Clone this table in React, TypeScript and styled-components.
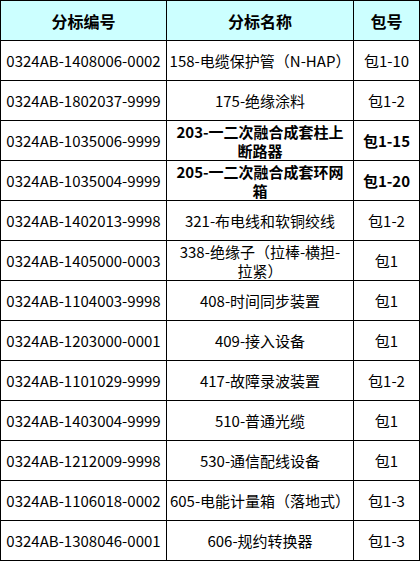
import { Fragment } from 'react'
import styled, { createGlobalStyle } from 'styled-components'

const GlobalStyle = createGlobalStyle`
  html, body {
    margin: 0;
    padding: 0;
    background: #ffffff;
  }
  body {
    font-family: "Noto Sans CJK SC", sans-serif;
    color: #000;
  }
`

const Table = styled.div`
  display: grid;
  grid-template-columns: 166px 187px 66px;
  grid-auto-rows: 40px;
  width: 420px;
  box-sizing: border-box;
  border-top: 1px solid #000;
  border-left: 1px solid #000;
`

const HeadCell = styled.div`
  display: flex;
  align-items: center;
  justify-content: center;
  box-sizing: border-box;
  border-right: 1px solid #000;
  border-bottom: 1px solid #000;
  background: #ccffff;
  font-size: 16px;
  font-weight: 700;
  color: #000;
`

const Cell = styled.div<{ $bold?: boolean }>`
  display: flex;
  flex-direction: column;
  align-items: center;
  justify-content: center;
  box-sizing: border-box;
  padding: 0 1px;
  border-right: 1px solid #000;
  border-bottom: 1px solid #000;
  font-size: 15px;
  line-height: 19px;
  font-weight: ${p => (p.$bold ? 700 : 400)};
  text-align: center;
  white-space: nowrap;
`

const Line = styled.span`
  display: block;
  height: 19px;
  overflow: visible;
`

type Row = {
  code: string
  name: string[]
  pack: string
  bold?: boolean
}

const rows: Row[] = [
  { code: '0324AB-1408006-0002', name: ['158-电缆保护管（N-HAP）'], pack: '包1-10' },
  { code: '0324AB-1802037-9999', name: ['175-绝缘涂料'], pack: '包1-2' },
  { code: '0324AB-1035006-9999', name: ['203-一二次融合成套柱上', '断路器'], pack: '包1-15', bold: true },
  { code: '0324AB-1035004-9999', name: ['205-一二次融合成套环网', '箱'], pack: '包1-20', bold: true },
  { code: '0324AB-1402013-9998', name: ['321-布电线和软铜绞线'], pack: '包1-2' },
  { code: '0324AB-1405000-0003', name: ['338-绝缘子（拉棒-横担-', '拉紧）'], pack: '包1' },
  { code: '0324AB-1104003-9998', name: ['408-时间同步装置'], pack: '包1' },
  { code: '0324AB-1203000-0001', name: ['409-接入设备'], pack: '包1' },
  { code: '0324AB-1101029-9999', name: ['417-故障录波装置'], pack: '包1-2' },
  { code: '0324AB-1403004-9999', name: ['510-普通光缆'], pack: '包1' },
  { code: '0324AB-1212009-9998', name: ['530-通信配线设备'], pack: '包1' },
  { code: '0324AB-1106018-0002', name: ['605-电能计量箱（落地式）'], pack: '包1-3' },
  { code: '0324AB-1308046-0001', name: ['606-规约转换器'], pack: '包1-3' },
]

export default function App() {
  return (
    <>
      <GlobalStyle />
      <Table>
        <HeadCell>分标编号</HeadCell>
        <HeadCell>分标名称</HeadCell>
        <HeadCell>包号</HeadCell>
        {rows.map(r => (
          <Fragment key={r.code}>
            <Cell>{r.code}</Cell>
            <Cell $bold={r.bold}>
              {r.name.map(line => (
                <Line key={line}>{line}</Line>
              ))}
            </Cell>
            <Cell $bold={r.bold}>{r.pack}</Cell>
          </Fragment>
        ))}
      </Table>
    </>
  )
}
